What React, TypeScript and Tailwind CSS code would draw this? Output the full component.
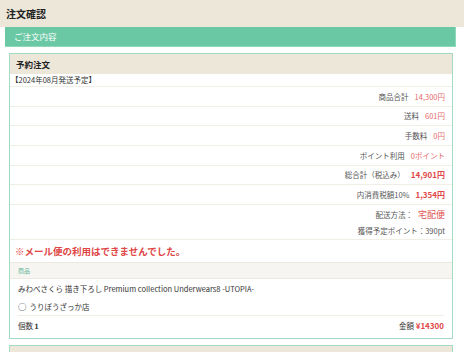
import React from 'react';

const font = { fontFamily: '"Noto Sans CJK JP", "Noto Sans", sans-serif' };

interface SummaryRow {
  label: string;
  value: string;
  strong?: boolean;
}

const rows: SummaryRow[] = [
  { label: '商品合計', value: '14,300円' },
  { label: '送料', value: '601円' },
  { label: '手数料', value: '0円' },
  { label: 'ポイント利用', value: '0ポイント' },
  { label: '総合計（税込み）', value: '14,901円', strong: true },
  { label: '内消費税額10%', value: '1,354円', strong: true },
];

export default function App() {
  return (
    <div className="w-[464px] h-[352px] overflow-hidden bg-white text-[#444]" style={font}>
      {/* ページ見出し */}
      <div className="h-[27px] bg-[#ece7d8] flex items-center pl-[6px]">
        <h1 className="text-[10px] font-bold text-[#222]">注文確認</h1>
      </div>

      {/* セクション見出し */}
      <div className="ml-[5px] mr-[8px] h-[20px] bg-[#6bc8a4] border-r border-b border-[#8fd8ba] flex items-center pl-[9px]">
        <span className="text-[8.5px] text-white">ご注文内容</span>
      </div>

      {/* 予約注文カード */}
      <div className="ml-[9px] mr-[11px] mt-[6px] border border-[#a3dcc3]">
        <div className="h-[20px] bg-[#ece7d8] flex items-center pl-[6px]">
          <span className="text-[8.5px] font-bold text-[#222]">予約注文</span>
        </div>
        <div className="h-[13px] flex items-center pl-[1px] border-b border-[#f1eee6]">
          <span className="text-[7.5px] text-[#333]">【2024年08月発送予定】</span>
        </div>

        {rows.map((r) => (
          <div
            key={r.label}
            className="h-[19.7px] flex items-center justify-end gap-[6px] pr-[7px] border-b border-[#f1eee6]"
          >
            <span className="text-[7.5px] text-[#555]">{r.label}</span>
            <span
              className={
                r.strong
                  ? 'text-[8px] font-bold text-[#e04848]'
                  : 'text-[7.5px] text-[#e56a6a]'
              }
            >
              {r.value}
            </span>
          </div>
        ))}

        {/* 配送方法 */}
        <div className="h-[35px] flex flex-col items-end justify-center gap-[3px] pr-[7px] border-b border-[#f1eee6]">
          <div className="flex items-center gap-[5px]">
            <span className="text-[7.5px] text-[#555]">配送方法：</span>
            <span className="text-[9px] text-[#e05050]">宅配便</span>
          </div>
          <span className="text-[7.5px] text-[#555]">獲得予定ポイント：390pt</span>
        </div>

        <div className="h-[22px] flex items-center pl-[5px]">
          <span className="text-[9.5px] font-bold text-[#e04646]">※メール便の利用はできませんでした。</span>
        </div>

        {/* 商品 */}
        <div className="h-[17px] bg-[#f6f5f1] border-y border-[#ebe8df] flex items-center pl-[8px]">
          <span className="text-[6px] text-[#6bb89a]">商品</span>
        </div>
        <div className="px-[8px] pb-[2px]">
          <div className="h-[19px] flex items-center">
            <span className="text-[7.5px] text-[#333]">
              みわべさくら 描き下ろし Premium collection Underwears8 -UTOPIA-
            </span>
          </div>
          <div className="h-[18px] flex items-center gap-[3px] border-b border-[#f1eee6]">
            <span className="text-[8.5px] text-[#333] leading-none">○</span>
            <span className="text-[7.5px] text-[#333]">うりぼうざっか店</span>
          </div>
          <div className="h-[20px] flex items-center justify-between">
            <span className="text-[7.5px] text-[#333]">
              個数 <span className="font-bold font-serif text-[8px]">1</span>
            </span>
            <span className="text-[7.5px] text-[#333]">
              金額 <span className="font-bold text-[8px] text-[#e04848]">¥14300</span>
            </span>
          </div>
        </div>
      </div>

      {/* 次のカード */}
      <div className="ml-[9px] mr-[11px] mt-[6px] border border-[#a3dcc3]">
        <div className="h-[20px] bg-[#ece7d8] flex items-center pl-[6px]">
          <span className="text-[8.5px] font-bold text-[#222]">予約注文</span>
        </div>
      </div>
    </div>
  );
}
